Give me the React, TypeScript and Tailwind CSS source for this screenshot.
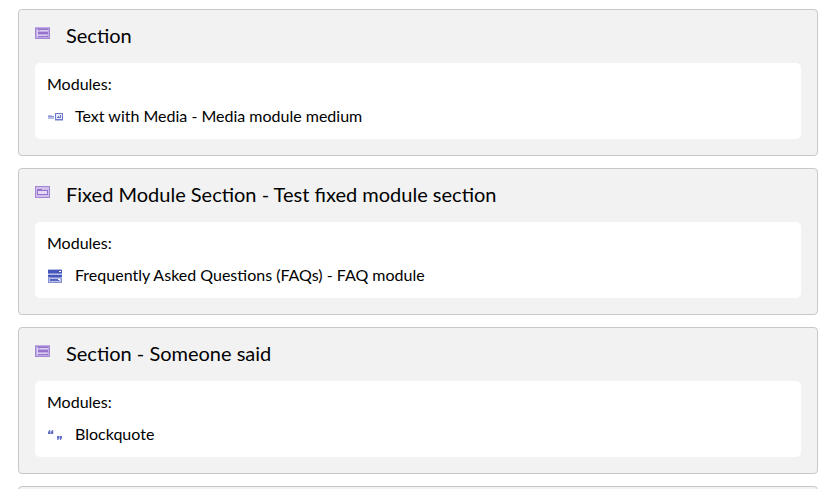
import type { ReactNode } from "react";

type SectionCardProps = {
  icon: ReactNode;
  title: string;
  moduleIcon?: ReactNode;
  moduleName?: string;
};

function SectionIcon() {
  return (
    <svg width="15" height="12" viewBox="0 0 15 12" shapeRendering="crispEdges">
      <path fill="#c0aae3" d="M0 0h15v12H0z" />
      <path fill="#a386d4" d="M0 1h15v1H0zM0 1h1v11H0zM14 1h1v11h-1zM0 11h15v1H0z" />
      <path fill="#9673cd" d="M3 2h10v1H3zM3 5h10v2H3zM3 9h10v1H3z" />
      <path fill="#ddd0f0" d="M2 3h1v7H2zM5 3h8v1H5zM3 8h9v1H3z" />
    </svg>
  );
}

function FixedSectionIcon() {
  return (
    <svg width="15" height="12" viewBox="0 0 15 12" shapeRendering="crispEdges">
      <path fill="#cfbfea" d="M0 0h15v12H0z" />
      <path fill="#a386d4" d="M0 0h15v1H0zM0 11h15v1H0zM0 0h1v12H0zM14 0h1v12h-1z" />
      <path fill="#9673cd" d="M2 3h5v1h6v5H2z" />
      <path fill="#e4daf3" d="M3 5h9v3H3z" />
    </svg>
  );
}

function MediaIcon() {
  return (
    <svg width="15" height="8" viewBox="0 0 15 8" shapeRendering="crispEdges">
      <path fill="#b5bce6" d="M0 2h4v1H0zM0 4h6v2H0z" />
      <path fill="#8f99d9" d="M0 3h6v1H0z" />
      <path fill="#6f7bcc" d="M7 0h8v7H7z" />
      <path fill="#e8eafa" d="M8 1h6v5H8z" />
      <path fill="#6a76c8" d="M9 4h1v1H9zM10 3h1v2h-1zM12 2h1v3h-2V4h1z" />
      <path fill="#b5bce6" d="M7 7h8v1H7z" />
    </svg>
  );
}

function FaqIcon() {
  return (
    <svg width="14" height="14" viewBox="0 0 14 14" shapeRendering="crispEdges">
      <path fill="#b7beea" d="M0 0h14v14H0z" />
      <path fill="#4557ba" d="M0 1h14v3H0zM0 6h14v2H0z" />
      <path fill="#8792d4" d="M0 4h14v1H0zM1 8h12v1H1zM0 9h1v4H0zM13 9h1v4h-1zM0 13h14v1H0z" />
      <path fill="#5967c1" d="M2 10h9v2H2z" />
      <path fill="#fff" d="M11 2h2v1h-2zM10 10h2v1h-2z" />
    </svg>
  );
}

function QuoteIcon() {
  return (
    <svg width="14" height="11" viewBox="0 0 14 11" fill="#4555b9">
      <path opacity=".85" d="M1.5 0H2.6L2 1.3h.5V4H0V2zM4.3 0h1.1l-.6 1.3h.5V4H2.9V2z" />
      <path opacity=".85" d="M9 6h2.4v2L10.2 10H9l.6-1.5H9zM11.8 6h2.2v2l-1.2 2h-1.1l.6-1.5h-.5z" />
    </svg>
  );
}

function SectionCard({ icon, title, moduleIcon, moduleName }: SectionCardProps) {
  return (
    <section className="h-[147px] shrink-0 rounded-[4px] border border-[#c8c8c8] bg-[#f2f2f2] px-4">
      <header className="flex h-[53px] items-start">
        <span className="mt-[17px] w-[31px]">{icon}</span>
        <h2 className="mt-[11px] text-[20px] leading-7 whitespace-nowrap">{title}</h2>
      </header>
      <div className="h-[76px] rounded-[5px] bg-white px-[12px] pt-[9px] text-[16px] leading-6">
        <p>Modules:</p>
        <div className="mt-2 flex h-6 items-center">
          <span className="w-7 pt-[2px] pl-px">{moduleIcon}</span>
          <span className="whitespace-nowrap">{moduleName}</span>
        </div>
      </div>
    </section>
  );
}

export default function App() {
  return (
    <main className="flex h-[489px] flex-col gap-3 overflow-hidden bg-white pt-[9px] pr-[19px] pl-[18px] font-[Lato,sans-serif] text-black">
      <SectionCard
        icon={<SectionIcon />}
        title="Section"
        moduleIcon={<MediaIcon />}
        moduleName="Text with Media - Media module medium"
      />
      <SectionCard
        icon={<FixedSectionIcon />}
        title="Fixed Module Section - Test fixed module section"
        moduleIcon={<FaqIcon />}
        moduleName="Frequently Asked Questions (FAQs) - FAQ module"
      />
      <SectionCard
        icon={<SectionIcon />}
        title="Section - Someone said"
        moduleIcon={<QuoteIcon />}
        moduleName="Blockquote"
      />
      <div className="h-[147px] shrink-0 rounded-[4px] border border-[#c8c8c8] bg-[#f2f2f2]" />
    </main>
  );
}
